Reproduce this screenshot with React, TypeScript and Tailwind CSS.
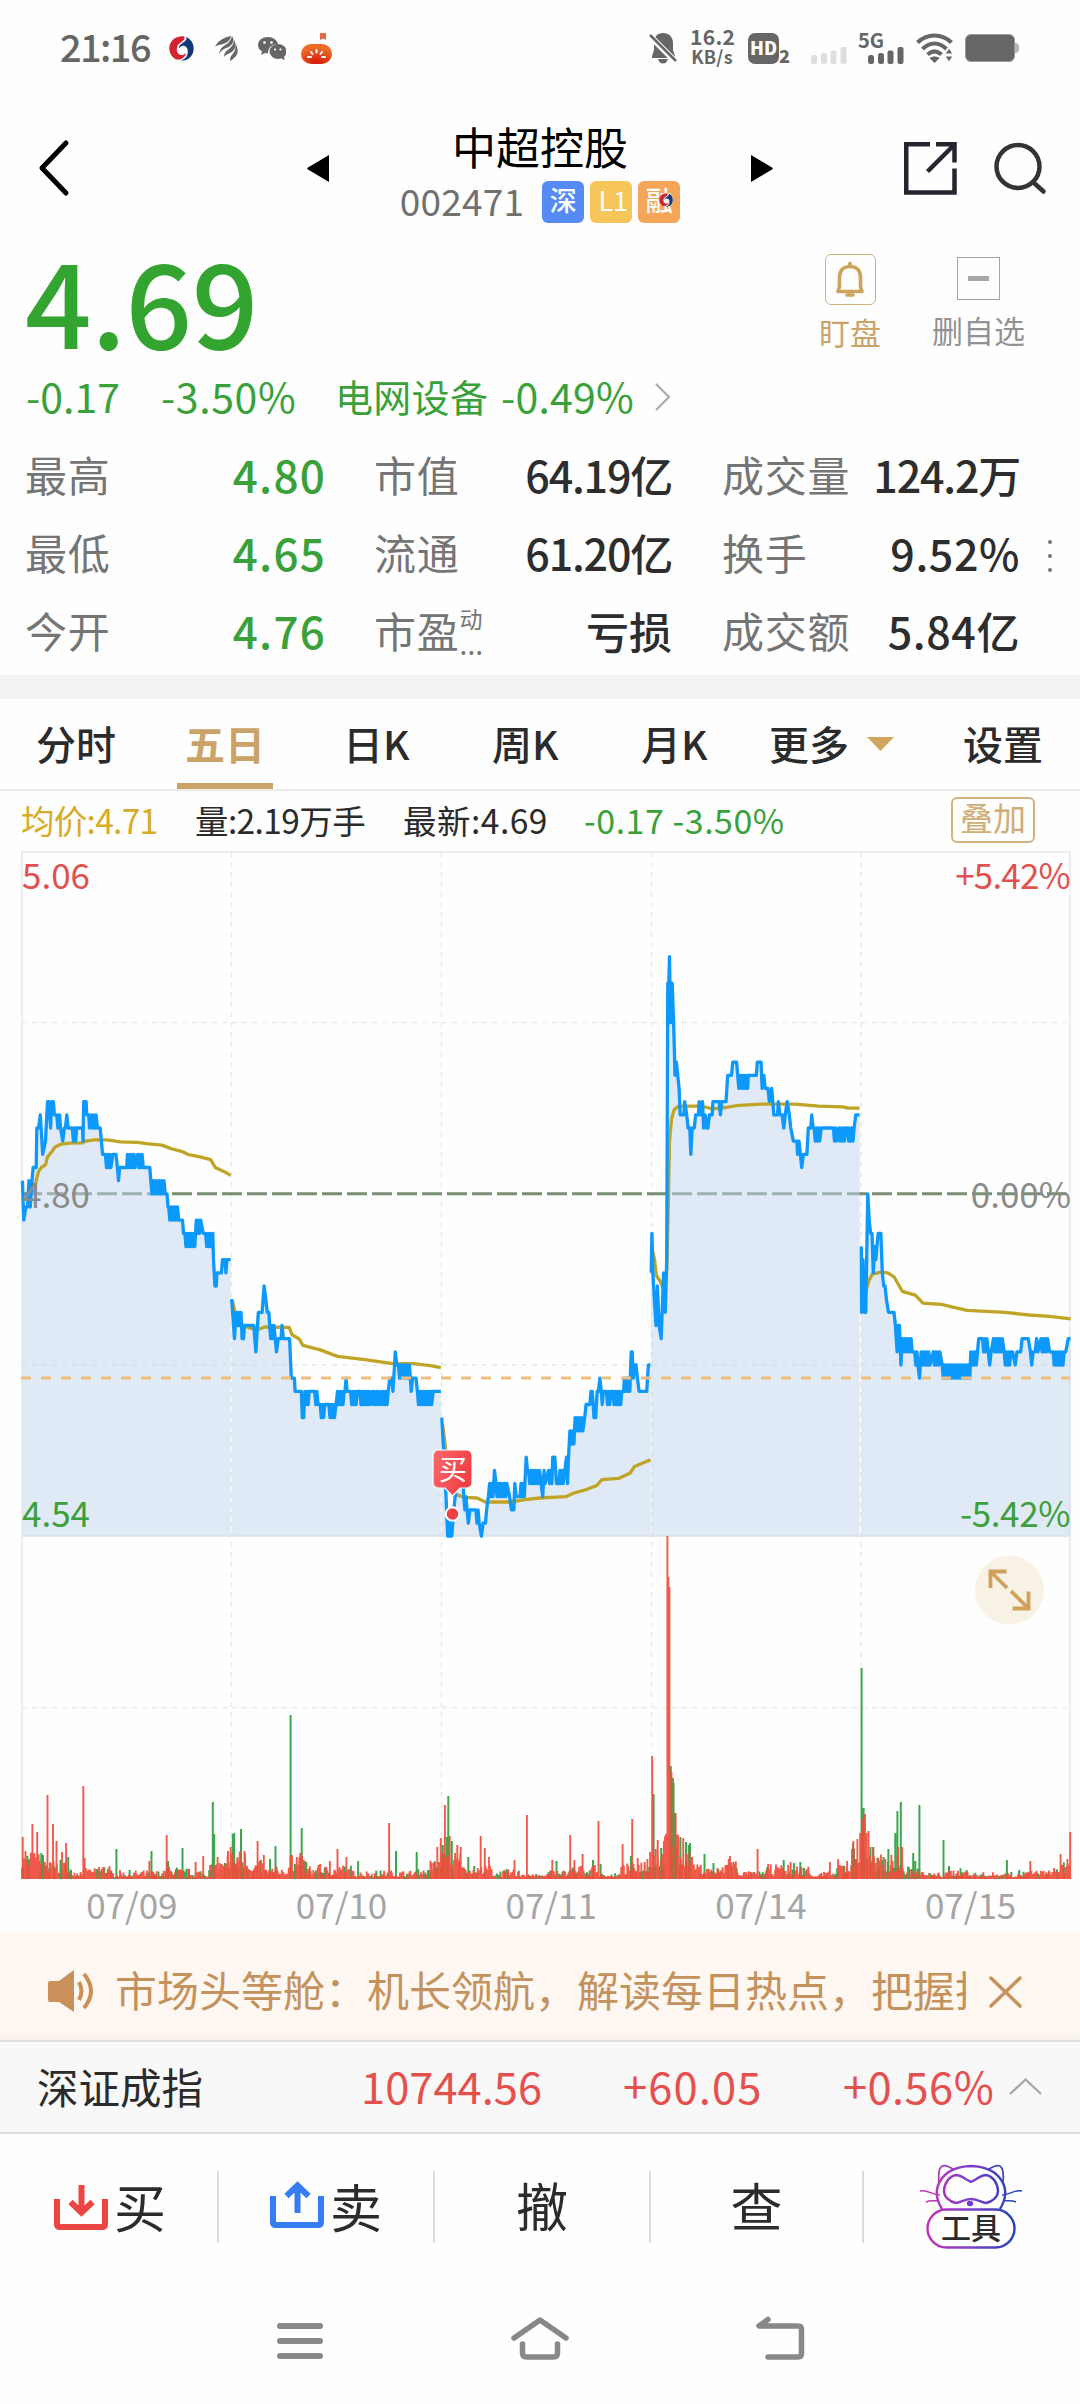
import type { ReactNode } from "react";

/* ── Escalas del gráfico ── */
const LEFT = 22;
const RIGHT = 1070;
const TOP = 852;
const MID = 1193.8;
const BOTTOM = 1536;
const VOL_BOTTOM = 1879;
const CENT = 13.17; // px por cada 0.01 de precio
const UNIT = 2.904; // unidades de muestreo por px

const DAYS = ["07/09", "07/10", "07/11", "07/14", "07/15"];
const DIVIDERS = [231.5, 441.5, 651.5, 861];

type Series = { base: number; price: string; avg: string };

// "t:nivel" = punto, "t-t2:a/b" = oscilación rápida entre dos niveles
const SERIES: Series[] = [
  {
    base: 0,
    price:
      "65:1 69:-2 75:-1 80:-1 84:1 88:-1 93:1 96:2 105:2 107:5 112:5 117:6 124:3 132:4 138:7 142:7 147:5 150:7 155:7 158:6 165:6 168:5 173:6 176:5 182:4 187:5 190:5 194:6 198:5 210:5 210-223:4/5 226:5 240:5 241:4 243:7 250:7 252:6 258:6 260:5 266-281:5/6 283:5 291:5 298:3 304:3 306-325:2/3 328:3 337:3 341-350:1/2 354:2 368:2 370-393:2/3 400-418:2/3 420:2 435:2 438-481:0/1 485:0 488:-1 490-520:-2/-1 522:-2 530:-2 533:-3 537-566:-4/-3 570-586:-3/-2 590:-3 597-615:-4/-3 618:-3 620:-5 624:-7 628:-7 630:-6 643:-6 646:-5 653:-5 656:-6 659:-5 670:-5",
    avg: "97:0 100:.3 105:1 112:1.7 120:2 132:2.2 138:2.8 150:3.2 160:3.55 175:3.75 200:3.85 240:3.87 247:4 275:4.1 310:4.1 350:3.95 400:3.9 430:3.8 470:3.7 500:3.4 530:3.2 545:3 580:2.8 612:2.6 625:2 650:1.7 670:1.4",
  },
  {
    base: 0,
    price:
      "673:-8 681:-11 685:-9 687-700:-10/-9 703:-11 707:-11 710:-10 737:-10 740:-11 743:-12 750:-9 761:-9 767:-7 772:-8 776:-9 781:-9 783-797:-11/-10 803:-12 808:-11 816:-11 819:-10 823:-11 841:-11 846:-14 855:-14 857:-15 875:-15 878:-17 882:-17 885-898:-16/-15 900:-15 912:-15 914-925:-16/-15 930-943:-17/-16 950:-16 955-972:-17/-16 976:-16 980-1000:-16/-15 1002:-15 1005:-14 1008:-15 1015:-15 1018-1040:-16/-15 1045-1076:-16/-15 1080-1104:-16/-15 1108-1130:-16/-15 1132:-14 1138:-14 1141:-15 1146:-13 1148:-12 1152:-13 1157-1190:-14/-13 1194:-15 1198:-14 1208:-14 1212-1256:-16/-15 1258:-15 1280:-15",
    avg: "675:-8.1 685:-9.3 700:-9.9 725:-10.2 750:-10.3 770:-10.1 840:-10.15 848:-10.7 868:-11 880:-11.5 930:-11.85 980:-12.35 1060:-12.6 1140:-12.9 1200:-12.9 1250:-13.05 1280:-13.2",
  },
  {
    base: 0,
    price:
      "1283:-17 1287:-19 1292:-21 1300:-26 1302-1313:-26/-24 1318:-24 1325:-22 1345:-22 1347-1357:-24/-23 1360:-25 1365:-24 1380:-24 1382-1393:-25/-24 1398:-26 1403:-25 1410:-25 1413:-24 1418:-23 1422-1433:-23/-22 1436:-21 1440-1475:-23/-22 1480:-23 1485:-24 1492:-24 1495:-22 1499:-23 1510:-23 1513-1523:-23/-22 1528:-20 1532:-21 1535-1568:-22/-21 1576:-23 1580:-21 1583:-22 1593-1603:-22/-21 1605:-20 1611:-20 1616:-22 1624:-22 1626-1638:-22/-21 1645:-20 1648:-22 1651:-20 1655:-18 1657-1668:-19/-18 1670-1693:-18/-17 1698:-17 1702:-16 1713:-16 1716:-15 1720:-15 1725:-17 1730:-17 1734:-15 1738:-15 1742:-14 1746:-15 1749:-16 1752:-15 1761-1776:-16/-15 1780-1808:-16/-15 1811:-15 1813-1830:-15/-14 1833:-12 1836:-12 1839:-14 1843:-13 1847:-13 1851:-14 1856:-15 1878:-15 1883:-13 1889:-13",
    avg: "1285:-17.5 1292:-18.9 1297:-20.2 1310:-22 1320:-22.8 1350:-23.05 1385:-23.1 1410:-23.4 1480:-23.4 1530:-23.2 1568:-23.1 1643:-23 1668:-22.7 1703:-22.45 1733:-22.15 1748:-21.7 1798:-21.6 1830:-21.2 1843:-20.7 1889:-20.2",
  },
  {
    base: 540,
    price:
      "323:-6 325:-3 328:-6 332:-8 337:-10 341:-7 346:-10 352:-11 356:-8 359:-6 364:-9 368:-5 371:16 374:16 376:18 379:13 382:16 384:16 388:13 392:9 396:10 400:9 404:8 407:6 418:6 420:7 426:6 430:5 435:5 438:3 442:5 448:5 452:6 460:6 462:7 466:6 472:7 475:5 480:6 484:5 488:5 492:6 500:6 502:7 520:7 524:6 528:7 540:7 545:9 556:9 560:10 571:10 574-603:8/9 605:9 628:9 631:10 642:10 645:8 650:9 654:8 662:8 666:7 673:8 676:7 679:6 690:6 692:7 697:6 703:6 708:5 712:6 718:7 724:6 728:5 736:4 746:4 748:3 752:4 756:3 760:2 765:3 775:3 779:5 786:5 789:6 793:5 796-815:4/5 817:5 850:5 852-862:4/5 868-888:4/5 893-915:4/5 917:6 928:6",
    avg: "324:-4 332:-4.9 338:-6.2 350:-6.7 356:-7.1 368:-6 372:-1.5 376:3.9 382:5.7 390:6.4 402:6.65 470:6.65 500:6.45 540:6.55 570:6.7 640:6.8 740:6.8 810:6.65 880:6.6 895:6.5 928:6.5",
  },
  {
    base: 540,
    price:
      "933:-4 934:-9 938:-5 942:-9 946:-9 950:-3 952:0 956:-2 960:-3 964:-3 968:-6 972-981:-5/-4 982:-3 990:-3 994:-6 998:-7 1002:-7 1006:-8 1012:-9 1028:-9 1032:-10 1037:-12 1040:-10 1044:-10 1048:-13 1052-1083:-12/-11 1088-1100:-13/-12 1102:-14 1107:-12 1110-1135:-13/-12 1142-1162:-13/-12 1168-1250:-14/-13 1251-1270:-13/-12 1274:-11 1285-1298:-12/-11 1306:-13 1310:-12 1317-1345:-12/-11 1348-1368:-13/-12 1372:-12 1380:-13 1385:-12 1396:-12 1400:-11 1418:-11 1424:-12 1428:-13 1432:-12 1438:-12 1442:-11 1446:-12 1455-1475:-12/-11 1480:-12 1490-1523:-13/-12 1527:-12 1534:-11 1541:-11",
    avg: "934:-6 946:-7.4 955:-6.6 965:-6.1 990:-5.95 1010:-6 1028:-6.3 1052:-7.4 1090:-7.7 1112:-8.3 1165:-8.4 1240:-8.85 1350:-9 1420:-9.2 1480:-9.3 1541:-9.5",
  },
];

function toPoints(raw: string, base: number): [number, number][] {
  const out: [number, number][] = [];
  const push = (t: number, level: number) => out.push([base + t / UNIT, MID - level * CENT]);
  for (const token of raw.split(" ")) {
    const [t, v] = token.split(":");
    if (v.includes("/")) {
      const [a, b] = t.split("-").map(Number);
      const [lo, hi] = v.split("/").map(Number);
      let up = true;
      for (let x = a; x <= b; x += 3.2) {
        push(x, up ? hi : lo);
        up = !up;
      }
    } else {
      push(Number(t), Number(v));
    }
  }
  return out;
}

const toPath = (pts: [number, number][]) => "M" + pts.map(([x, y]) => `${x.toFixed(1)} ${y.toFixed(1)}`).join("L");

/* ── Volumen: picos conocidos + ruido determinista ── */
// x (px*1.452) : alto en px : color
const SPIKES =
  "33:42r 37:28r 47:55r 54:47r 60:26g 69:84r 77:55r 82:38r 90:27r 96:36r 99:22g 121:93r 123:21r 169:30g 217:18r 220:28g 242:44r 244:18g 265:31g 284:17r 295:23r 309:77g 311:45g 316:22r 331:28r 335:32r 338:45g 340:46g 345:22r 350:50g 355:28r 374:38r 383:24r 392:20g 400:33g 422:164g 424:24r 431:22r 436:26r 438:51g 465:15r 479:18r 490:30r 503:22r 520:18g 565:56r 575:28g 605:27g 627:16r 635:32r 640:41r 643:34g 646:74r 649:42g 651:83g 653:43r 656:38g 664:34r 669:32r 680:22g 698:43r 704:31r 710:22r 747:19r 765:64r 802:19r 808:18g 828:44r 834:19r 846:25r 861:19g 869:58r 872:15g 904:35r 916:23g 918:60r 926:21r 936:17r 940:20r 944:27r 947:123r 949:85g 952:30r 955:39r 960:31g 964:38r 967:45r 969:343r 970.5:302r 972:292r 974:113g 975:107r 977:101g 978:96g 980:66g 981:66r 985:39r 988:42g 992:41r 996:37g 1000:34g 1002:36g 1005:22r 1023:25g 1036:16g 1058:20r 1060:23r 1065:17r 1100:30r 1138:19g 1148:17r 1153:16g 1162:17g 1205:17r 1230:18r 1239:38r 1240:30g 1245:40r 1249:46r 1251:211g 1253:60r 1254:71g 1256:65r 1258:46r 1261:48r 1264:32g 1268:32g 1283:22g 1290:30g 1296:18r 1300:46g 1303:68g 1304:32r 1308:77g 1310:32r 1326:26g 1329:18g 1335:74g 1370:39g 1378:13g 1462:19g 1480:9g 1496:18r 1540:25r 1550:20r 1554:47r";

// Envolvente del ruido por tramos [hasta x, base, extra]
const NOISE: [number, number, number][] = [
  [50, 10, 18], [68, 8, 18], [100, 5, 13], [140, 2, 8], [160, 4, 12], [240, 1, 7], [260, 3, 9], [305, 1, 9],
  [330, 6, 12], [360, 9, 20], [385, 6, 12], [420, 2, 10], [445, 7, 16], [480, 3, 10], [510, 2, 12], [600, 1, 7],
  [625, 3, 6], [640, 6, 14], [672, 10, 18], [715, 4, 9], [770, 1, 8], [795, 1, 3], [820, 1, 8], [870, 2, 11],
  [900, 1, 4], [920, 3, 12], [944, 6, 14], [965, 10, 22], [985, 30, 14], [1005, 12, 18], [1020, 4, 10], [1052, 3, 9],
  [1070, 8, 12], [1110, 2, 5], [1175, 2, 12], [1215, 1, 6], [1235, 5, 14], [1250, 12, 26], [1270, 14, 22],
  [1310, 6, 18], [1340, 3, 9], [1375, 1, 5], [1410, 2, 8], [1470, 1, 5], [1500, 1, 7], [1530, 3, 5], [1560, 4, 12],
];

type Bar = { x: number; h: number; up: boolean };

const BARS: Bar[] = (() => {
  const bars: Bar[] = [];
  let seed = 7;
  const rand = () => {
    seed = (seed * 16807) % 2147483647;
    return seed / 2147483647;
  };
  for (let x = 32; x < 1554; x += 1.27) {
    const [, lo, extra] = NOISE.find(([end]) => x < end) ?? NOISE[0];
    const r = rand();
    bars.push({ x: x / 1.452, h: lo + 1 + extra * r * r, up: rand() > 0.28 });
  }
  for (const token of SPIKES.split(" ")) {
    const [x, v] = token.split(":");
    bars.push({ x: Number(x) / 1.452, h: parseFloat(v), up: v.endsWith("r") });
  }
  return bars;
})();

const barsPath = (up: boolean) =>
  BARS.filter((b) => b.up === up).map((b) => `M${b.x.toFixed(1)} ${VOL_BOTTOM}v-${b.h.toFixed(1)}`).join("");

function PriceChart() {
  return (
    <svg className="block w-full h-[1036px]" viewBox="0 848 1080 1036" fontSize="35" fill="none">
      {/* Rejilla */}
      <g stroke="#e9e9e9" strokeWidth="1.5">
        <path d={`M${LEFT} ${TOP}H${RIGHT}V${VOL_BOTTOM}M${LEFT} ${TOP}V${VOL_BOTTOM}`} />
        <path strokeDasharray="5 5" d={`M${LEFT} 1022.5H${RIGHT}M${LEFT} 1365H${RIGHT}M${LEFT} 1707.5H${RIGHT}`} />
        <path strokeDasharray="5 5" d={DIVIDERS.map((x) => `M${x} ${TOP}V${VOL_BOTTOM}`).join("")} />
      </g>
      <path stroke="#788f72" strokeWidth="3" strokeDasharray="20 5" d={`M${LEFT} ${MID}H1066`} />

      {SERIES.map((s, i) => {
        const price = toPoints(s.price, s.base);
        return (
          <path
            key={i}
            fill="#c1d5ed"
            fillOpacity="0.5"
            d={`${toPath(price)}V${BOTTOM}H${price[0][0].toFixed(1)}Z`}
          />
        );
      })}
      <path stroke="#d8e0e8" strokeWidth="1.5" d={`M${LEFT} ${BOTTOM}H${RIGHT}`} />
      {SERIES.map((s, i) => (
        <g key={i} strokeWidth="3.3" strokeLinejoin="round">
          <path stroke="#c0a426" d={toPath(toPoints(s.avg, s.base))} />
          <path stroke="#0d98fb" d={toPath(toPoints(s.price, s.base))} />
        </g>
      ))}
      <path stroke="#f0bd7c" strokeWidth="3" strokeDasharray="10 10" d={`M21 1378H${RIGHT}`} />

      {/* Volumen */}
      <path stroke="#3fa650" strokeWidth="2" d={barsPath(false)} />
      <path stroke="#f04c3b" strokeWidth="1.9" strokeOpacity="0.92" d={barsPath(true)} />

      <text x="22" y="889" fill="#e0524f">5.06</text>
      <text x="1070" y="889" fill="#e0524f" textAnchor="end" letterSpacing="-0.8">+5.42%</text>
      <text x="22" y="1208" fill="#8b8b8b">4.80</text>
      <text x="1071" y="1208" fill="#8b8b8b" textAnchor="end">0.00%</text>
      <text x="22" y="1527" fill="#3b9f3b">4.54</text>
      <text x="1070" y="1527" fill="#3b9f3b" textAnchor="end" letterSpacing="-0.4">-5.42%</text>

      {/* Marca de compra */}
      <defs>
        <linearGradient id="buy" x1="0" x2="1" y1="0" y2="0.4">
          <stop offset="0" stopColor="#fb6a6d" />
          <stop offset="1" stopColor="#ef4043" />
        </linearGradient>
      </defs>
      <path d="M439 1450h28a5 5 0 0 1 5 5v28a5 5 0 0 1-5 5h-7l-7.500 8-7.500-8h-7a5 5 0 0 1-5-5v-28a5 5 0 0 1 5-5Z" fill="url(#buy)" stroke="#fff" strokeWidth="1.200" />
      <text x="453" y="1480" fontSize="28" fill="#fff" textAnchor="middle">买</text>
      <circle cx="452.500" cy="1514" r="6.800" fill="#ef4043" stroke="#fff" strokeWidth="2" />

      {/* Botón ampliar */}
      <circle cx="1009.500" cy="1590" r="34.500" fill="#f8f2e6" />
      <path stroke="#cfa25a" strokeWidth="3.800" d="M1006.500 1571.500h-16v16.500M991 1572l16 16M1012.500 1608.500h16v-17M1028 1608l-17-17" />
    </svg>
  );
}

/* ── Iconos ── */
function Swirl({ className }: { className: string }) {
  return (
    <svg className={className} viewBox="0 0 24 24">
      <circle cx="12" cy="12" r="12" fill="#fff" />
      <path d="M14.500 .300C6-.500 .300 5 .300 12c0 4.500 2.500 8.500 6.500 10.500C12 23.500 16 20 16.500 16c-3 4-9 2.500-9-3C7.500 8 11 6.500 13 5c2-1.500 2.500-3.500 1.500-4.700Z" fill="#d2232f" />
      <path d="M16.500 .900C21 2.800 23.700 7 23.700 12c0 7-5.200 12-12.700 11.800 4.500-1.800 7-4.300 7-8.800 0-4-2.500-6-5.500-5.500-1.500.300-2.500 1.500-3 2.800C9 9 12 7.500 14 6c2.500-1.500 3.500-3.300 2.500-5.100Z" fill="#123a78" />
    </svg>
  );
}

function SignalBars({ className }: { className: string }) {
  return (
    <svg className={className} viewBox="0 0 36 17" fill="currentColor">
      <rect x="0" y="8" width="6" height="9" rx="2.500" />
      <rect x="10" y="6" width="6" height="11" rx="2.500" />
      <rect x="19.500" y="3.500" width="6" height="13.500" rx="2" />
      <rect x="29.500" y="0" width="6" height="17" rx="2" />
    </svg>
  );
}

function StatusBar() {
  return (
    <div className="h-24 flex items-center text-[#666]">
      <span className="ml-[60px] w-[109px] text-[38px] leading-none tracking-[-1.6px] font-medium pb-[5px]">21:16</span>
      <Swirl className="w-[25px] h-[25px]" />
      <svg className="ml-[21px] w-[23px] h-[26px]" viewBox="0 0 23 26" fill="#666">
        <path d="M0 12C2 7 7 3 16 1c-1 5-4 6.500-8 8-4 1-7 1.500-8 3Z" />
        <path d="M4 19c1-5 3-7 7-9.500 3-2 5-4.500 6-8.500C20 6 18 10 12.500 12.500 8 14 5.500 16 4 19Z" />
        <path d="M9 22c0-4 2-6 5-8 3-2.500 5-5 5-9.500C22 11 20 15 16 17.500c-4 2-5.500 2.500-7 4.500Z" />
        <path d="M15.500 26c-1-3 .500-5 2.500-7.500 2-2.500 3-5.500 2.500-10 2.500 4 3 9 .500 12.500-1.500 2-3.500 3-5.500 5Z" />
      </svg>
      <svg className="ml-[20px] w-[28px] h-[25px]" viewBox="0 0 28 25" fill="#666">
        <path d="M10 1C4.500 1 0 4.500 0 9c0 2.500 1.500 5 4 6.500L3 19l4-2 3 .500c0-6 4-9.500 10-9.500C19 4 15 1 10 1Z" />
        <ellipse cx="20" cy="15.500" rx="8.500" ry="7.500" />
        <path d="M22 21l4.500 3.500-.500-5Z" />
        <g fill="#fff">
          <circle cx="6.500" cy="6.500" r="1.300" /><circle cx="13.500" cy="6.500" r="1.300" />
          <circle cx="17" cy="13.500" r="1.100" /><circle cx="22.500" cy="13.500" r="1.100" />
        </g>
      </svg>
      <svg className="ml-[15px] w-[31px] h-[31px]" viewBox="0 0 31 31">
        <defs>
          <radialGradient id="melon" cx="0.500" cy="0.900" r="0.700">
            <stop offset="0" stopColor="#d51708" />
            <stop offset="1" stopColor="#ee6a28" />
          </radialGradient>
        </defs>
        <path d="M19 0h6v7l-3-1.500-3 1.500Z" fill="#e2694a" />
        <rect x="0" y="11" width="31" height="20" rx="10" fill="url(#melon)" />
        <path stroke="#fff" strokeWidth="2" strokeLinecap="round" d="M15.500 17v2.500M10 19l1.500 2M21 19l-1.500 2M7 24h3M24 24h-3" />
      </svg>

      <svg className="ml-[317px] w-[28px] h-[32px]" viewBox="0 0 28 32" fill="#666">
        <path d="M14 1c6 0 10 4 10 10v7l2 6v2H3v-2l2-6v-7c0-6 3-10 9-10Z" />
        <path d="M9 27h10c-1 3-2.500 4.500-5 4.500S10 30 9 27Z" />
        <path d="M-1 2L28 31" stroke="#fff" strokeWidth="6" />
        <path d="M1 3L27 29" stroke="#666" strokeWidth="2.500" />
      </svg>
      <div className="ml-[13px] w-[44px] text-[21px] font-bold leading-[20px] text-center whitespace-nowrap -mt-1">
        <div className="tracking-[0.3px]">16.2</div>
        <div className="text-[18px] tracking-[0.3px]">KB/s</div>
      </div>
      <div className="ml-[14px] w-[31px] h-[31px] rounded-[7px] bg-[#666] text-white text-[18px] font-black leading-[28px] text-center">HD</div>
      <span className="w-[12px] text-[18px] font-black leading-none mt-[14px]">2</span>
      <SignalBars className="ml-[20px] mt-[14px] w-[36px] h-[17px] text-[#dedede]" />
      <div className="ml-[11px] w-[46px] h-[32px] flex flex-col">
        <span className="text-[20px] leading-[15px] h-[15px] font-bold">5G</span>
        <SignalBars className="w-[36px] h-[17px] ml-[10px]" />
      </div>
      <svg className="ml-[12px] w-[38px] h-[30px]" viewBox="0 0 38 30" fill="none" stroke="#666" strokeWidth="4">
        <path d="M1.500 9.500C11 0 26 0 35.500 9.500M6.500 16C14 8.500 23 8.500 30.500 16M11.500 21.500c4.500-4 9.500-4 14 0" />
        <path d="M13.500 25c3-2 7-2 10 0L18.500 30Z" fill="#666" stroke="none" />
        <path d="M29 21l4-6 4 6ZM29 23l4 6 4-6Z" fill="#666" stroke="#fff" strokeWidth="1" />
      </svg>
      <div className="ml-[11px] w-[50px] h-[28px] rounded-[6px] bg-[#666] border border-[#999]" />
      <div className="w-[4px] h-[10px] rounded-r bg-[#b5b5b5]" />
    </div>
  );
}

function Tag({ color, children }: { color: string; children: ReactNode }) {
  return (
    <span className={`relative w-[42px] h-[42px] rounded-[6px] text-[27px] leading-[38px] text-center text-white font-medium ${color}`}>
      {children}
    </span>
  );
}

function Header() {
  return (
    <div className="h-36 flex items-center">
      <svg className="ml-[38px] w-[32px] h-[58px]" viewBox="0 0 32 58" fill="none" stroke="#000" strokeWidth="5" strokeLinecap="round" strokeLinejoin="round">
        <path d="M28 4L4 29l24 25" />
      </svg>
      <svg className="ml-[237px] w-[22px] h-[29px]" viewBox="0 0 22 29"><path d="M22 1v27L1 15.500q-1.500-1 0-2Z" /></svg>
      <div className="w-[422px] h-full flex flex-col items-center">
        <div className="text-[44px] leading-[44px] mt-[28px] text-black whitespace-nowrap">中超控股</div>
        <div className="flex items-center gap-[6px] mt-[13px]">
          <span className="text-[37px] leading-[42px] text-[#707070] tracking-[0.2px] mr-[12px] -mt-[4px]">002471</span>
          <Tag color="bg-[#568bf5]">深</Tag>
          <Tag color="bg-[#f7c65a]"><span className="font-normal pl-1">L1</span></Tag>
          <Tag color="bg-[#f5a557]">融<Swirl className="absolute left-[21px] top-[12px] w-[14px] h-[14px]" /></Tag>
        </div>
      </div>
      <svg className="w-[22px] h-[29px]" viewBox="0 0 22 29"><path d="M0 1v27L21 15.500q1.500-1 0-2Z" /></svg>
      <svg className="ml-[131px] w-[53px] h-[53px]" viewBox="0 0 53 53" fill="none" stroke="#25252f" strokeWidth="4.500">
        <path d="M26 2.250H2.250V50.500H50.500V26.500M32 2.250H50.500V20.500M50 3L23.500 29.500" />
      </svg>
      <svg className="ml-[37px] w-[53px] h-[53px]" viewBox="0 0 53 53" fill="none" stroke="#333" strokeWidth="4.500" strokeLinecap="round">
        <circle cx="24" cy="24.500" r="21.500" />
        <path d="M39 40l10.500 9.500" />
      </svg>
    </div>
  );
}

const STATS = [
  ["最高", "4.80", "市值", "64.19亿", "成交量", "124.2万"],
  ["最低", "4.65", "流通", "61.20亿", "换手", "9.52%"],
  ["今开", "4.76", "市盈", "亏损", "成交额", "5.84亿"],
];

function Quote() {
  return (
    <div className="h-[435px] text-[#3aa13a]">
      <div className="h-[130px] flex">
        <div className="ml-[25px] w-[794px] text-[117px] leading-[117px] font-medium text-[#34a430] tracking-[-0.5px]">4.69</div>
        <div className="w-[62px] flex flex-col items-center text-[#cba368] whitespace-nowrap">
          <div className="mt-[14px] w-[51px] h-[51px] rounded-[6px] border border-[#d3b27c] flex items-center justify-center">
            <svg className="w-[28px] h-[36px]" viewBox="0 0 28 36" fill="none" stroke="#cba35e" strokeWidth="3.600" strokeLinejoin="round">
              <path d="M14 4.500c-7 0-10.500 4.500-10.500 11v9L2 29.500h24l-1.500-5v-9c0-6.500-3.500-11-10.500-11Z" />
              <path d="M14 1.500v3M11 33h6" strokeLinecap="round" />
            </svg>
          </div>
          <span className="text-[31px] leading-[48px] mt-[3px]">盯盘</span>
        </div>
        <div className="ml-[50px] w-[95px] flex flex-col items-center text-[#929295] whitespace-nowrap">
          <div className="mt-[17px] w-[43px] h-[43px] border border-[#a5a5a5] flex items-center justify-center">
            <div className="w-[21px] h-[5px] bg-[#a8a8a8]" />
          </div>
          <span className="text-[31px] leading-[48px] mt-[6px]">删自选</span>
        </div>
      </div>

      <div className="h-[56px] flex items-center text-[41px] leading-[50px] pb-[7px] whitespace-nowrap">
        <span className="ml-[26px] w-[135px]">-0.17</span>
        <span className="w-[174px] tracking-[0.6px]">-3.50%</span>
        <span className="w-[166px] text-[38px] tracking-[0.3px] pt-[3px]">电网设备</span>
        <span className="tracking-[0.2px]">-0.49%</span>
        <svg className="ml-[21px] mt-[5px] w-[16px] h-[28px]" viewBox="0 0 16 28" fill="none" stroke="#aaa" strokeWidth="2.200"><path d="M1 1l13 13L1 27" /></svg>
      </div>

      <div className="relative mt-[11px] text-[42px] leading-[72px] text-[#2d2d2d] whitespace-nowrap">
        {STATS.map(([l1, v1, l2, v2, l3, v3]) => (
          <div key={l1} className="h-[78px] pb-[4px] flex items-center">
            <span className="ml-[25px] w-[120px] text-[#757575] tracking-[0.8px]">{l1}</span>
            <span className="w-[181px] text-right text-[44px] font-medium text-[#3aa13a] tracking-[1.2px]">{v1}</span>
            <span className="ml-[48px] flex w-[120px] text-[#757575] tracking-[0.8px]">
              {l2}
              {l2 === "市盈" && (
                <span className="flex flex-col text-[23px] leading-[30px] pt-[9px]">
                  <span>动</span>
                  <span className="text-[28px] tracking-[0px] leading-[20px]">...</span>
                </span>
              )}
            </span>
            <span className={`w-[178px] text-right text-[43px] font-medium ${v2.length > 2 ? "tracking-[-1.2px]" : ""}`}>{v2}</span>
            <span className="ml-[50px] text-[#757575] w-[130px] tracking-[0.8px]">{l3}</span>
            <span className={`w-[168px] text-right text-[43px] font-medium ${v3.length > 5 ? "tracking-[-1.2px]" : "tracking-[0.6px]"}`}>{v3}</span>
          </div>
        ))}
        <div className="absolute right-[28px] top-[103px] flex flex-col gap-[10px]">
          {[0, 1, 2].map((i) => <span key={i} className="w-[4px] h-[4px] rounded-full bg-[#777]" />)}
        </div>
      </div>
    </div>
  );
}

function PeriodTabs() {
  return (
    <div className="h-[92px] flex text-[40px] leading-[88px] font-medium text-[#2b2b2b] border-b-2 border-[#ececec] whitespace-nowrap">
      <span className="ml-[36px] w-[141px]">分时</span>
      <span className="w-[96px] h-[90px] text-center text-[#cba368] font-bold border-b-[6px] border-[#cba368]">五日</span>
      <span className="ml-[70px] w-[149px]">日K</span>
      <span className="w-[149px]">周K</span>
      <span className="w-[128px]">月K</span>
      <span className="w-[98px]">更多</span>
      <svg className="w-[27px] h-[14px] mt-[38px]" viewBox="0 0 27 14" fill="#d2a45e"><path d="M0 0h27L13.500 14Z" /></svg>
      <span className="ml-[69px]">设置</span>
    </div>
  );
}

function InfoRow() {
  return (
    <div className="h-[57px] flex items-center text-[33.5px] leading-[50px] text-[#2b2b2b] whitespace-nowrap">
      <span className="ml-[21px] w-[174px] text-[#d6ab27] tracking-[-0.7px]">均价:4.71</span>
      <span className="w-[208px] tracking-[-0.6px]">量:2.19万手</span>
      <span className="w-[181px] tracking-[0.5px]">最新:4.69</span>
      <span className="w-[367px] text-[#3aa13a] text-[34px] tracking-[0.5px]">-0.17 -3.50%</span>
      <span className="w-[84px] h-[46px] rounded-[6px] border-2 border-[#d3b27c] text-[#d0ad74] text-[33px] leading-[37px] text-center">叠加</span>
    </div>
  );
}

function Banner() {
  return (
    <div className="h-[109px] flex items-center bg-linear-to-b from-[#fff8f2] from-90% to-[#f7f1eb] text-[#c4925d]">
      <svg className="ml-[48px] mt-[10px] w-[50px] h-[44px]" viewBox="0 0 50 44" fill="none" stroke="#c9905a" strokeWidth="4">
        <path d="M2 12h9L26 1v42L11 33H2q-2 0-2-2V14q0-2 2-2Z" fill="#c9905a" stroke="none" />
        <path d="M31 13q5 9 0 18M36 5q14 17 0 34" />
      </svg>
      <span className="ml-[17px] w-[851px] overflow-hidden whitespace-nowrap text-[42px] leading-[60px] mt-[7px]">市场头等舱：机长领航，解读每日热点，把握投资机会</span>
      <svg className="ml-[23px] mt-[13px] w-[33px] h-[32px]" viewBox="0 0 33 32" stroke="#c4925d" strokeWidth="3.500" strokeLinecap="round"><path d="M2 2l29 28M31 2L2 30" /></svg>
    </div>
  );
}

function IndexRow() {
  return (
    <div className="h-[94px] flex items-center bg-[#f8f8f8] border-y-2 border-[#dfdfdf] text-[43.5px] leading-[60px] text-[#e5504f] whitespace-nowrap pb-[2px]">
      <span className="ml-[37px] w-[324px] text-[41.5px] text-[#2b2b2b]">深证成指</span>
      <span className="w-[262px]">10744.56</span>
      <span className="w-[220px] tracking-[1.1px]">+60.05</span>
      <span className="w-[166px] tracking-[0.4px]">+0.56%</span>
      <svg className="w-[33px] h-[17px]" viewBox="0 0 33 17" fill="none" stroke="#a5a5a5" strokeWidth="2.200"><path d="M1 16L16.500 1.500 32 16" /></svg>
    </div>
  );
}

function ToolCat() {
  return (
    <svg className="w-[106px] h-[88px]" viewBox="0 0 106 88" fill="none" stroke="url(#cat)" strokeWidth="2.400">
      <defs>
        <linearGradient id="cat" gradientUnits="userSpaceOnUse" x1="8" x2="96" y1="0" y2="0">
          <stop offset="0" stopColor="#c233b4" />
          <stop offset="0.500" stopColor="#7a3fcb" />
          <stop offset="1" stopColor="#2344b8" />
        </linearGradient>
      </defs>
      <path d="M23 46C10 25 23 4 52 3c29 1 42 22 29 43" />
      <path d="M20 21C19 11 20 5 23 3c3-1 8 1 12 4M84 21c1-10 0-16-3-18-3-1-8 1-12 4" strokeWidth="1.700" />
      <path d="M37 12c5 0 9 4 15 7 6-3 10-7 15-7 7 1 12 9 12 16 0 6-6 11-12 12-4 0-8-4-15-4s-11 4-15 4c-6-1-12-6-12-12 0-7 5-15 12-16Z" />
      <path d="M1 28c7-2 12 4 20 4M7 39c4-2 8-1 13-1M103 28c-7-2-12 4-20 4M97 39c-4-2-8-1-13-1" strokeWidth="1.500" />
      <ellipse cx="51" cy="40.500" rx="3.200" ry="2.800" fill="#6c3fc9" stroke="none" />
      <rect x="8.500" y="46.500" width="87" height="38" rx="19" fill="#fff" />
      <text x="52" y="76" textAnchor="middle" fontSize="30" fontWeight="500" fill="#2b2b2b" stroke="none">工具</text>
    </svg>
  );
}

function TradeBar() {
  return (
    <div className="h-[146px] flex items-center text-[52px] leading-[72px] text-[#2b2b2b]">
      <div className="w-[217px] h-[72px] flex items-center">
        <svg className="ml-[54px] mr-[6px] w-[54px] h-[46px]" viewBox="0 0 54 46" fill="none" stroke="#ee4444" strokeWidth="6">
          <path d="M3 15v25q0 3 3 3h42q3 0 3-3V15M27.500 1v25M16.500 18l11 10.500 11-10.500" />
        </svg>
        <span className="pb-[2px]">买</span>
      </div>
      <div className="w-[216px] h-[72px] flex items-center border-l-2 border-[#dcdcdc]">
        <svg className="ml-[51px] mr-[6px] w-[54px] h-[47px] -mt-[5px]" viewBox="0 0 54 47" fill="none" stroke="#367cf3" strokeWidth="6">
          <path d="M3 15v26q0 3 3 3h42q3 0 3-3V15M27.500 32V4M16.500 15l11-10.500 11 10.500" />
        </svg>
        <span className="pb-[2px]">卖</span>
      </div>
      <div className="w-[216px] h-[72px] leading-[68px] border-l-2 border-[#dcdcdc] text-center">撤</div>
      <div className="w-[213px] h-[72px] leading-[68px] border-l-2 border-[#dcdcdc] text-center">查</div>
      <div className="w-[218px] h-[72px] flex items-center border-l-2 border-[#dcdcdc]">
        <span className="ml-[55px]"><ToolCat /></span>
      </div>
    </div>
  );
}

function NavBar() {
  return (
    <div className="h-[122px] flex items-center">
      <svg className="ml-[277px] w-[46px] h-[36px]" viewBox="0 0 46 36" stroke="#888" strokeWidth="6" strokeLinecap="round"><path d="M3 3h40M3 18h40M3 33h40" /></svg>
      <svg className="ml-[187px] -mt-[7px] w-[60px] h-[44px]" viewBox="0 0 60 44" fill="none" stroke="#888" strokeWidth="5.500" strokeLinecap="round" strokeLinejoin="round">
        <path d="M4 22L30 4l26 18M12.500 28v9q0 4 4 4h27q4 0 4-4v-9" />
      </svg>
      <svg className="ml-[185px] -mt-[7px] w-[50px] h-[44px]" viewBox="0 0 50 44" fill="none" stroke="#888" strokeWidth="5.500" strokeLinecap="round" strokeLinejoin="round">
        <path d="M13 3.500L4 10h39q3.500 0 3.500 3.500v24q0 3.500-3.500 3.500H13" />
      </svg>
    </div>
  );
}

export default function App() {
  return (
    <div className="w-[1080px] h-[2404px] overflow-hidden bg-[#fefefe] font-['Noto_Sans_CJK_SC',sans-serif]">
      <StatusBar />
      <Header />
      <Quote />
      <div className="h-[24px] bg-[#f3f3f5]" />
      <PeriodTabs />
      <InfoRow />
      <PriceChart />
      <div className="h-[47px] flex ml-[27px] text-[35px] leading-[40px] text-[#a5a5a5]">
        {DAYS.map((d) => <span key={d} className="w-[209.7px] text-center">{d}</span>)}
      </div>
      <Banner />
      <IndexRow />
      <TradeBar />
      <NavBar />
    </div>
  );
}
